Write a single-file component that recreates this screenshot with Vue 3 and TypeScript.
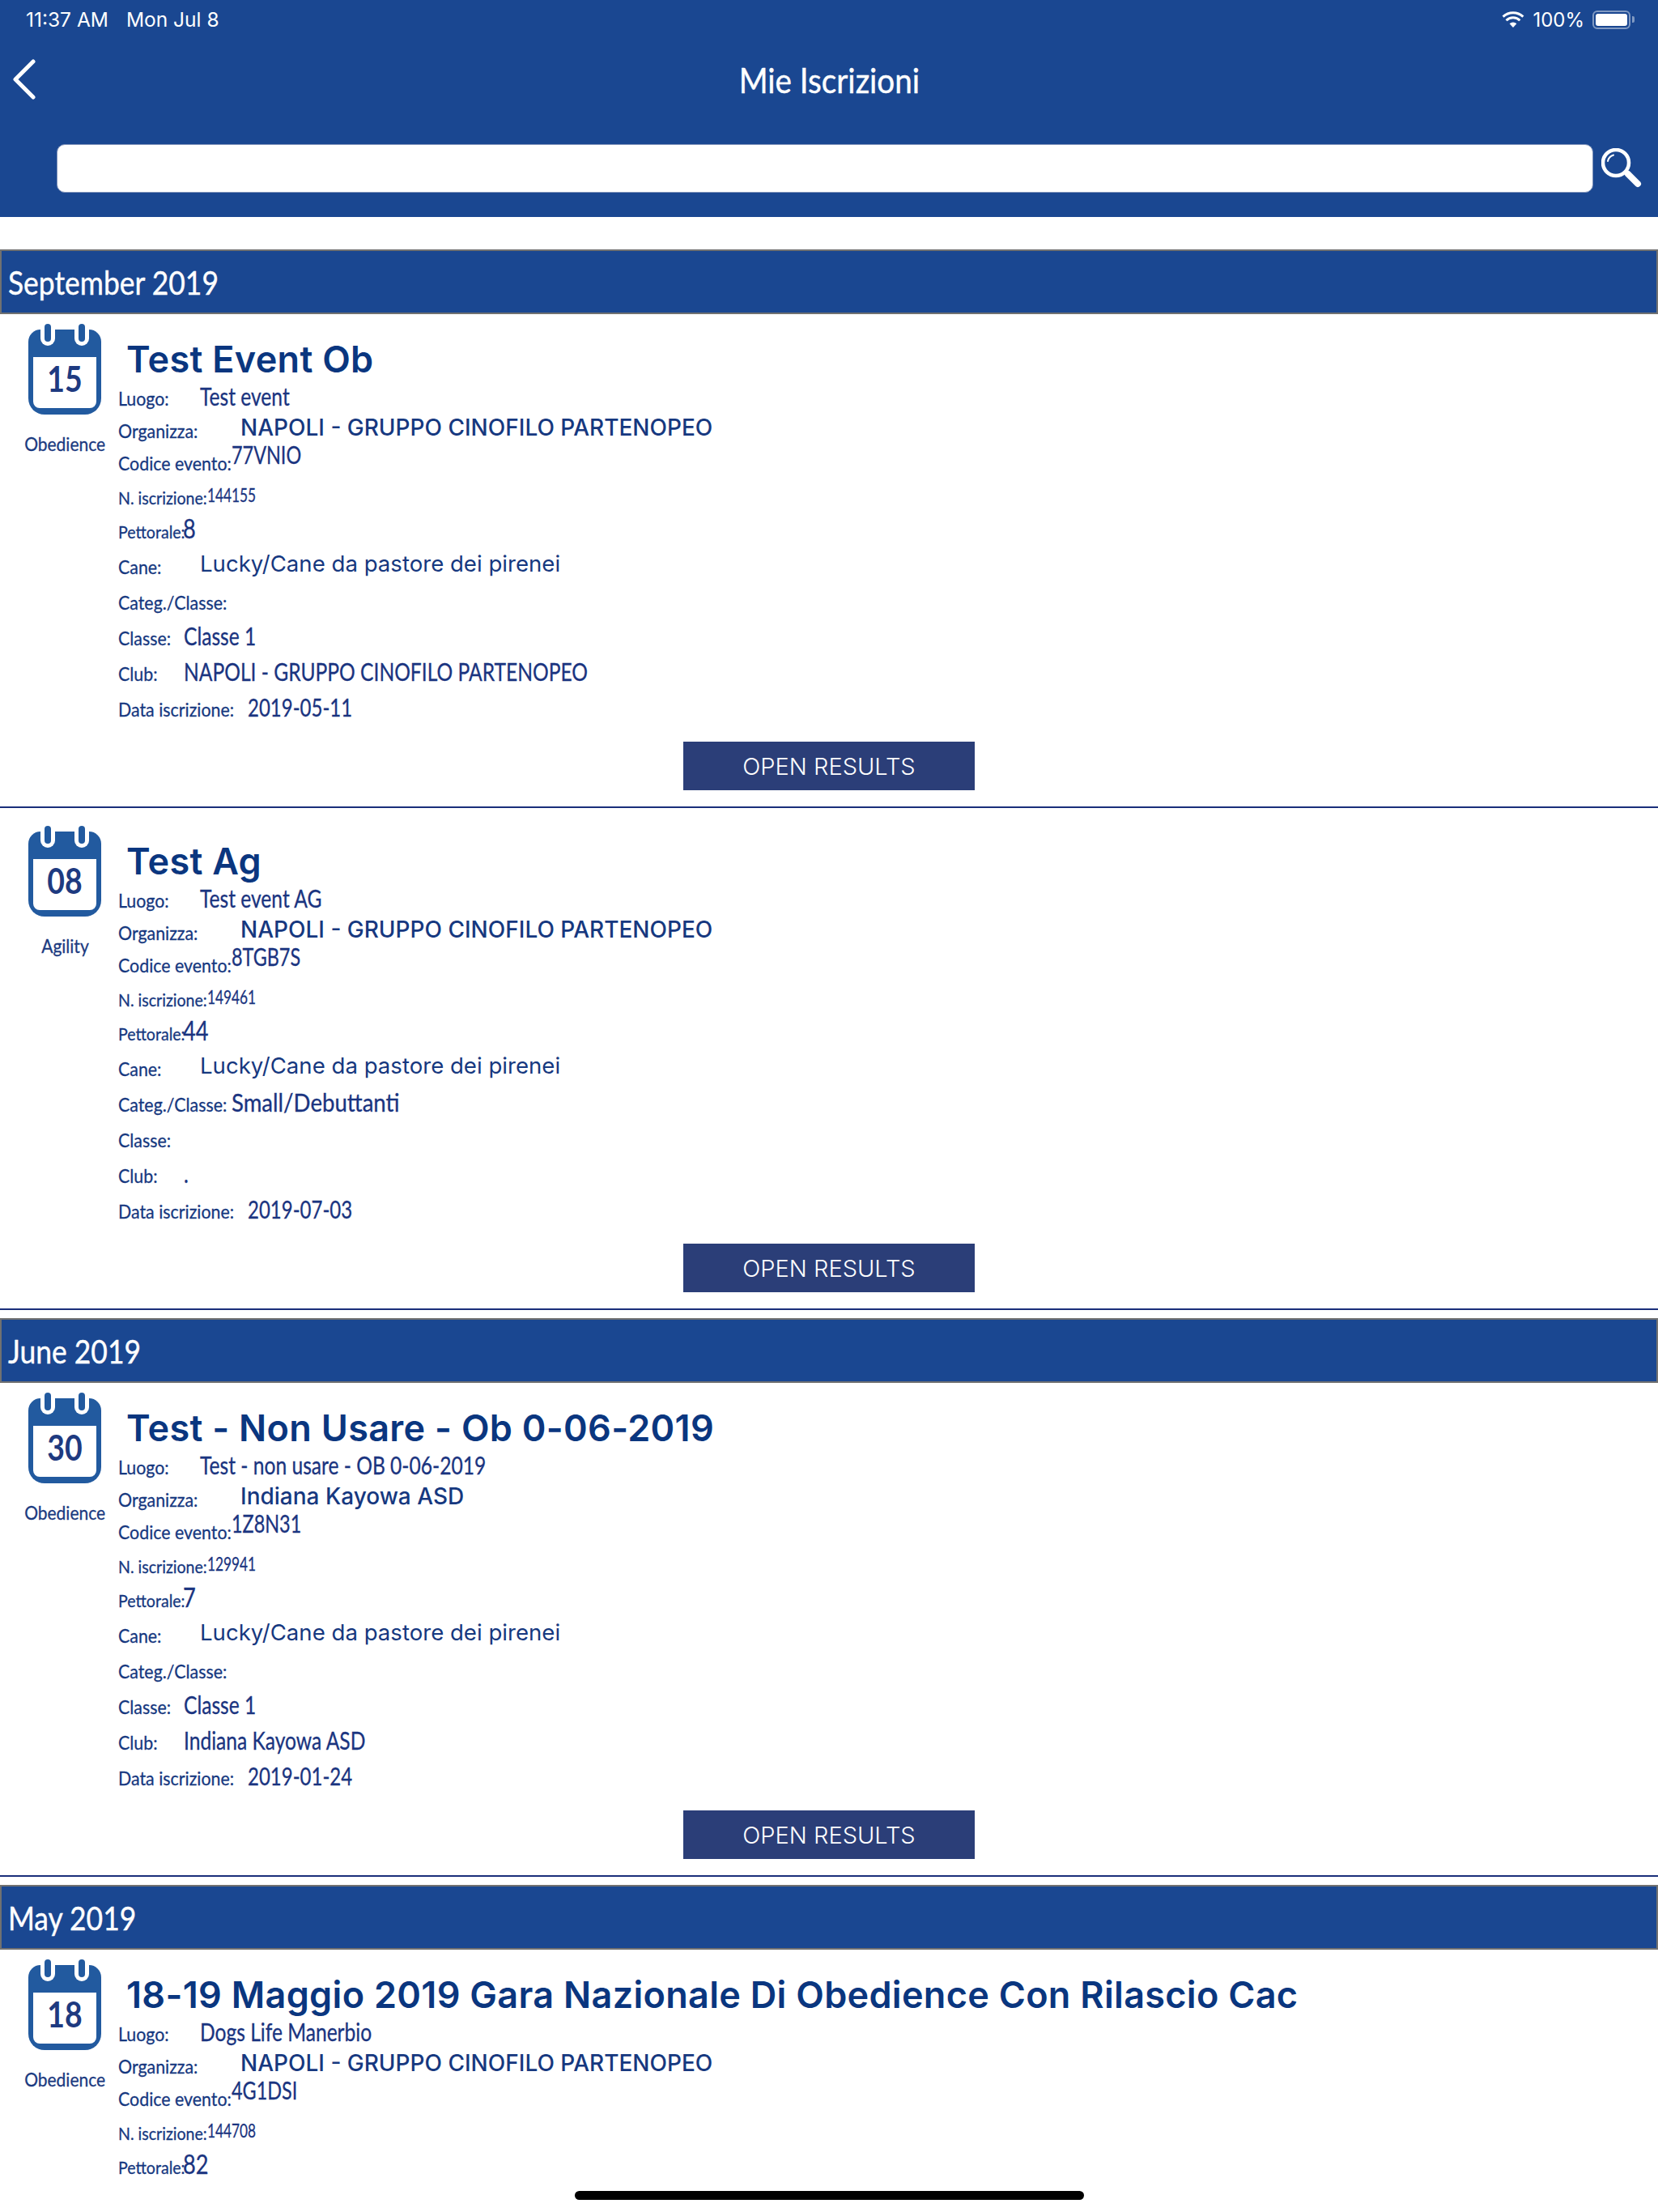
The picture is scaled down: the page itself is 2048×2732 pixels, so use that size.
<script setup lang="ts">
interface Row {
  key: string;
  label: string;
  value: string;
}

interface Entry {
  day: string;
  kind: string;
  title: string;
  rows: Row[];
  button: boolean;
}

interface Section {
  month: string;
  entries: Entry[];
}

function makeRows(v: string[]): Row[] {
  const keys = ['luogo', 'org', 'cod', 'num', 'pett', 'cane', 'categ', 'classe', 'club', 'data'];
  const labels = ['Luogo:', 'Organizza:', 'Codice evento:', 'N. iscrizione:', 'Pettorale:', 'Cane:', 'Categ./Classe:', 'Classe:', 'Club:', 'Data iscrizione:'];
  return v.map((value, i) => ({ key: keys[i], label: labels[i], value }));
}

const napoli = 'NAPOLI - GRUPPO CINOFILO PARTENOPEO';
const dog = 'Lucky/Cane da pastore dei pirenei';

const sections: Section[] = [
  {
    month: 'September 2019',
    entries: [
      {
        day: '15',
        kind: 'Obedience',
        title: 'Test Event Ob',
        button: true,
        rows: makeRows(['Test event', napoli, '77VNIO', '144155', '8', dog, '', 'Classe 1', napoli, '2019-05-11']),
      },
      {
        day: '08',
        kind: 'Agility',
        title: 'Test Ag',
        button: true,
        rows: makeRows(['Test event AG', napoli, '8TGB7S', '149461', '44', dog, 'Small/Debuttanti', '', '.', '2019-07-03']),
      },
    ],
  },
  {
    month: 'June 2019',
    entries: [
      {
        day: '30',
        kind: 'Obedience',
        title: 'Test - Non Usare - Ob 0-06-2019',
        button: true,
        rows: makeRows(['Test - non usare - OB 0-06-2019', 'Indiana Kayowa ASD', '1Z8N31', '129941', '7', dog, '', 'Classe 1', 'Indiana Kayowa ASD', '2019-01-24']),
      },
    ],
  },
  {
    month: 'May 2019',
    entries: [
      {
        day: '18',
        kind: 'Obedience',
        title: '18-19 Maggio 2019 Gara Nazionale Di Obedience Con Rilascio Cac',
        button: false,
        rows: makeRows(['Dogs Life Manerbio', napoli, '4G1DSI', '144708', '82']),
      },
    ],
  },
];
</script>

<template>
  <div class="screen">
    <header class="top">
      <div class="status">
        <div class="status-left">
          <span>11:37 AM</span>
          <span>Mon Jul 8</span>
        </div>
        <div class="status-right">
          <svg class="wifi" width="28" height="20" viewBox="0 0 28 20">
            <path d="M14 20 L9.6 15.2 A6.5 6.5 0 0 1 18.4 15.2Z" fill="#fff" />
            <path d="M5.6 11.2 A12 12 0 0 1 22.4 11.2" fill="none" stroke="#fff" stroke-width="3" />
            <path d="M1.6 6.6 A18 18 0 0 1 26.4 6.6" fill="none" stroke="#fff" stroke-width="3" />
          </svg>
          <span>100%</span>
          <div class="battery"><div class="battery-fill"></div></div>
          <div class="battery-nub"></div>
        </div>
      </div>
      <div class="nav">
        <svg class="back" width="30" height="50" viewBox="0 0 30 50">
          <path d="M27 3 L5 25 L27 47" fill="none" stroke="#fff" stroke-width="5" stroke-linecap="round" stroke-linejoin="round" />
        </svg>
        <div class="nav-title"><span>Mie Iscrizioni</span></div>
      </div>
      <div class="search">
        <div class="search-box"></div>
        <svg class="search-icon" width="50" height="50" viewBox="0 0 50 50">
          <circle cx="18" cy="18" r="16" fill="none" stroke="#fff" stroke-width="4.5" />
          <path d="M8 16 A10 10 0 0 1 15 8.5" fill="none" stroke="#fff" stroke-width="2" stroke-linecap="round" />
          <path d="M33 32 L45 44" fill="none" stroke="#fff" stroke-width="8" stroke-linecap="round" />
        </svg>
      </div>
    </header>

    <main class="list">
      <section v-for="s in sections" :key="s.month">
        <div class="month"><span>{{ s.month }}</span></div>
        <article v-for="e in s.entries" :key="e.title" class="entry">
          <div class="entry-body">
            <div class="side">
              <svg class="cal" width="90" height="112" viewBox="0 0 90 112">
                <path d="M15 7H75A15 15 0 0 1 90 22V92A20 20 0 0 1 70 112H20A20 20 0 0 1 0 92V22A15 15 0 0 1 15 7Z" fill="#225a9f" />
                <path d="M6 41H84V96A8 8 0 0 1 76 104H14A8 8 0 0 1 6 96Z" fill="#fff" />
                <rect x="15" y="0" width="18" height="27" rx="9" fill="#fff" />
                <rect x="57" y="0" width="18" height="27" rx="9" fill="#fff" />
                <rect x="15" y="0" width="18" height="14" fill="#fff" />
                <rect x="57" y="0" width="18" height="14" fill="#fff" />
                <rect x="20" y="0" width="8" height="22" rx="4" fill="#225a9f" />
                <rect x="62" y="0" width="8" height="22" rx="4" fill="#225a9f" />
                <text transform="translate(45 84) scale(0.85 1)" text-anchor="middle" class="cal-day">{{ e.day }}</text>
              </svg>
              <div class="kind"><span>{{ e.kind }}</span></div>
            </div>
            <div class="info">
              <h2 class="title">{{ e.title }}</h2>
              <div v-for="r in e.rows" :key="r.key" class="row" :class="'row-' + r.key">
                <span class="lab"><span class="lab-text">{{ r.label }}</span></span><span class="val">{{ r.value }}</span>
              </div>
            </div>
          </div>
          <template v-if="e.button">
            <div class="actions">
              <button class="open">OPEN RESULTS</button>
            </div>
            <div class="rule"></div>
          </template>
        </article>
      </section>
    </main>

    <div class="home"></div>
  </div>
</template>

<style scoped>
.screen {
  position: relative;
  width: 2048px;
  height: 2732px;
  overflow: hidden;
  background: #fff;
  font-family: Lato, "Liberation Sans", sans-serif;
}

.top {
  height: 268px;
  background: #1a4791;
  color: #fff;
  display: flex;
  flex-direction: column;
}

.status {
  height: 48px;
  display: flex;
  justify-content: space-between;
  align-items: center;
  padding: 0 29px 0 32px;
  font-family: Inter, sans-serif;
  font-size: 24px;
}

.status-left {
  display: flex;
  gap: 22px;
  font-size: 24.5px;
}

.status-right {
  display: flex;
  align-items: center;
  gap: 10px;
}

.battery {
  width: 47px;
  height: 23px;
  border: 2px solid rgba(255, 255, 255, 0.45);
  border-radius: 6px;
  padding: 2px;
  box-sizing: border-box;
}

.battery-fill {
  width: 100%;
  height: 100%;
  background: #fff;
  border-radius: 3px;
}

.battery-nub {
  width: 3px;
  height: 8px;
  margin-left: -8px;
  background: rgba(255, 255, 255, 0.45);
  border-radius: 0 2px 2px 0;
}

.nav {
  height: 100px;
  display: flex;
  align-items: center;
  position: relative;
  padding-left: 14px;
}

.nav-title {
  position: absolute;
  left: 0;
  right: 0;
  padding-top: 2px;
  text-align: center;
  font-size: 42px;
  -webkit-text-stroke: 0.4px #fff;
}

.nav-title span {
  display: inline-block;
  transform: scaleX(0.92);
}

.search {
  display: flex;
  align-items: center;
  padding: 0 20px 0 70px;
  margin-top: 30px;
  gap: 10px;
}

.search-box {
  flex: 1;
  height: 60px;
  background: #fff;
  border: 1px solid #8093ba;
  border-radius: 10px;
  box-sizing: border-box;
}

.list {
  padding-top: 40px;
}

.month {
  height: 80px;
  box-sizing: border-box;
  background: #1a4791;
  border: 2px solid #717171;
  color: #fff;
  font-size: 40px;
  line-height: 78px;
  padding-left: 8px;
  -webkit-text-stroke: 0.4px #fff;
}

.month span {
  display: inline-block;
  transform: scaleX(0.886);
  transform-origin: left;
}

.entry {
  height: 610px;
  margin-bottom: 10px;
  display: flex;
  flex-direction: column;
}

.entry-body {
  flex: 1;
  display: flex;
  padding-top: 12px;
}

.side {
  width: 132px;
  padding-left: 14px;
  display: flex;
  flex-direction: column;
  align-items: center;
}

.cal {
  display: block;
}

.cal-day {
  font-size: 44px;
  font-weight: 700;
  fill: #1e3a80;
}

.kind {
  margin-top: 21px;
  font-size: 24px;
  line-height: 30px;
  color: #1b3a80;
  white-space: nowrap;
  -webkit-text-stroke: 0.3px #1b3a80;
}

.kind span {
  display: inline-block;
  transform: scaleX(0.875);
}

.info {
  flex: 1;
  color: #16387f;
}

.title {
  margin: 0 0 0 10px;
  height: 70px;
  font-family: Inter, sans-serif;
  font-weight: 600;
  font-size: 45px;
  line-height: 88px;
  letter-spacing: 0.3px;
  color: #0a367f;
  white-space: nowrap;
}

.row {
  height: 44px;
  font-size: 24px;
  line-height: 44px;
  white-space: nowrap;
}

.lab {
  display: inline-block;
  line-height: 0;
  font-size: 24px;
  color: #16387f;
  -webkit-text-stroke: 0.3px #16387f;
}

.lab-text {
  display: inline-block;
  transform: scaleX(0.89);
  transform-origin: left;
}

.val {
  display: inline-block;
  line-height: 0;
  font-size: 30px;
  color: #1a3480;
  transform: scaleX(0.82);
  transform-origin: left;
  -webkit-text-stroke: 0.3px #1a3480;
}

.row-luogo,
.row-org {
  height: 40px;
}

.row-cod,
.row-num {
  height: 42px;
}

.row-luogo .lab,
.row-cane .lab {
  width: 101px;
}

.row-org .lab {
  width: 151px;
}

.row-cod .lab,
.row-categ .lab {
  width: 140px;
}

.row-num .lab {
  width: 110px;
  font-size: 22px;
}

.row-pett .lab {
  width: 80px;
  font-size: 22px;
}

.row-classe .lab,
.row-club .lab {
  width: 81px;
}

.row-data .lab {
  width: 160px;
}

.row-org .val,
.row-cane .val {
  font-family: Inter, sans-serif;
  color: #16387f;
  transform: none;
  vertical-align: 3px;
  -webkit-text-stroke: 0;
}

.row-org .val {
  font-size: 28px;
  font-weight: 500;
}

.row-cane .val {
  font-size: 27.6px;
}

.row-cod .val {
  vertical-align: 8px;
  transform: scaleX(0.78);
}

.row-num .val {
  font-size: 24px;
  vertical-align: 3px;
  transform: scaleX(0.72);
}

.row-pett .val {
  font-size: 32px;
  transform: scaleX(0.85);
}

.row-categ .val {
  transform: scaleX(0.92);
}

.row-data .val {
  transform: scaleX(0.8);
}

.actions {
  display: flex;
  justify-content: center;
  height: 80px;
}

.open {
  width: 360px;
  height: 60px;
  border: 0;
  padding: 0;
  background: #2b3e78;
  color: #fff;
  font-family: Inter, sans-serif;
  font-size: 29px;
  font-weight: 300;
}

.rule {
  height: 2px;
  background: #1a2f7a;
}

.home {
  position: absolute;
  left: 710px;
  bottom: 15px;
  width: 629px;
  height: 11px;
  border-radius: 6px;
  background: #000;
}
</style>
